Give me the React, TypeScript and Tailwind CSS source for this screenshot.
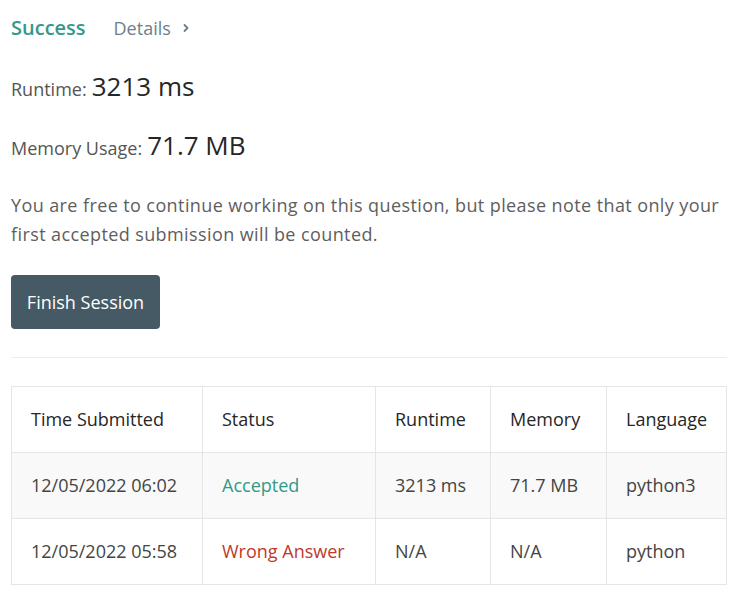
import React from 'react';

type Row = {
  time: string;
  status: string;
  ok: boolean;
  runtime: string;
  memory: string;
  lang: string;
};

const ROWS: Row[] = [
  { time: '12/05/2022 06:02', status: 'Accepted', ok: true, runtime: '3213 ms', memory: '71.7 MB', lang: 'python3' },
  { time: '12/05/2022 05:58', status: 'Wrong Answer', ok: false, runtime: 'N/A', memory: 'N/A', lang: 'python' },
];

const cell = 'border border-[#e5e5e5] pl-[19px] text-left align-middle font-normal';

const App: React.FC = () => {
  return (
    <div className="min-h-screen bg-white pl-[11px] pr-[18px] pt-[13px] text-[#333] font-['Open_Sans','Noto_Sans',sans-serif]">
      {/* header */}
      <div className="flex items-center gap-[28px]">
        <span className="text-[20px] font-semibold text-[#34998c]">Success</span>
        <span className="flex items-center gap-[10px] text-[18px] text-[#6c7f89]">
          Details
          <svg width="10" height="10" viewBox="0 0 10 10" fill="none" stroke="currentColor" strokeWidth="1.8" strokeLinecap="round" strokeLinejoin="round">
            <polyline points="3.5 2 6.5 5 3.5 8" />
          </svg>
        </span>
      </div>

      <div className="mt-[24px] flex items-baseline gap-[5px]">
        <span className="text-[18px] text-[#555]">Runtime:</span>
        <span className="text-[26px] text-[#262626]">3213 ms</span>
      </div>
      <div className="mt-[20px] flex items-baseline gap-[5px]">
        <span className="text-[18px] text-[#555]">Memory Usage:</span>
        <span className="text-[26px] text-[#262626]">71.7 MB</span>
      </div>

      <p className="mt-[26px] text-[18px] leading-[29px] tracking-[0.4px] text-[#5e5e5e]">
        You are free to continue working on this question, but please note that only your first accepted submission will be counted.
      </p>

      <button className="mt-[26px] h-[54px] w-[149px] rounded-[4px] bg-[#465a65] text-[18px] text-white">
        Finish Session
      </button>

      <div className="mt-[28px] border-t border-[#ececec]" />

      <table className="mt-[28px] w-full border-collapse text-[18px]">
        <colgroup>
          <col className="w-[191px]" />
          <col className="w-[173px]" />
          <col className="w-[115px]" />
          <col className="w-[116px]" />
          <col />
        </colgroup>
        <thead>
          <tr className="h-[66px] text-[#262626]">
            <th className={cell}>Time Submitted</th>
            <th className={cell}>Status</th>
            <th className={cell}>Runtime</th>
            <th className={cell}>Memory</th>
            <th className={cell}>Language</th>
          </tr>
        </thead>
        <tbody>
          {ROWS.map((r, i) => (
            <tr key={r.time} className={`h-[66px] text-[#444] ${i % 2 === 0 ? 'bg-[#f9f9f9]' : 'bg-white'}`}>
              <td className={cell}>{r.time}</td>
              <td className={`${cell} ${r.ok ? 'text-[#2f9a88]' : 'text-[#c0392b]'}`}>{r.status}</td>
              <td className={cell}>{r.runtime}</td>
              <td className={cell}>{r.memory}</td>
              <td className={cell}>{r.lang}</td>
            </tr>
          ))}
        </tbody>
      </table>
    </div>
  );
};

export default App;
